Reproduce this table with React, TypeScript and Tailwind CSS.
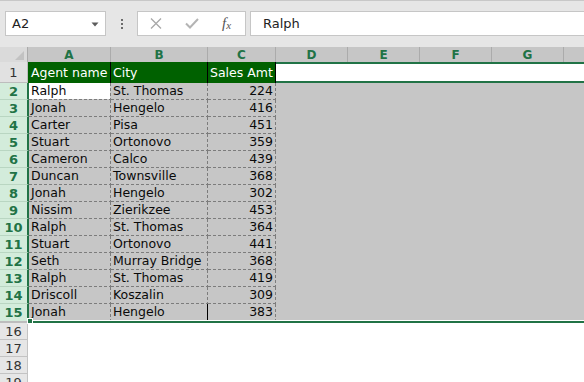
import React from "react";

const rows: [string, string, number][] = [
  ["Ralph", "St. Thomas", 224],
  ["Jonah", "Hengelo", 416],
  ["Carter", "Pisa", 451],
  ["Stuart", "Ortonovo", 359],
  ["Cameron", "Calco", 439],
  ["Duncan", "Townsville", 368],
  ["Jonah", "Hengelo", 302],
  ["Nissim", "Zierikzee", 453],
  ["Ralph", "St. Thomas", 364],
  ["Stuart", "Ortonovo", 441],
  ["Seth", "Murray Bridge", 368],
  ["Ralph", "St. Thomas", 419],
  ["Driscoll", "Koszalin", 309],
  ["Jonah", "Hengelo", 383],
];

const HDASH =
  "bg-[image:repeating-linear-gradient(to_right,#7c7c7c_0px,#7c7c7c_3px,transparent_3px,transparent_5px)]";
const VDASH =
  "bg-[image:repeating-linear-gradient(to_bottom,#7c7c7c_0px,#7c7c7c_3px,transparent_3px,transparent_5px)]";

function DataCell({
  width,
  text,
  alignRight,
  active,
  last,
  solidRight,
}: {
  width: string;
  text: string;
  alignRight?: boolean;
  active?: boolean;
  last?: boolean;
  solidRight?: boolean;
}) {
  return (
    <div className={`${width} h-full flex flex-col shrink-0`}>
      <div className="flex flex-1 min-h-0">
        <div
          className={`flex-1 min-w-0 flex items-center overflow-hidden whitespace-nowrap leading-none pt-[1px] ${
            alignRight ? "justify-end pr-[2px]" : "pl-[2px]"
          } ${active ? "bg-white" : "bg-[#c6c6c6]"} text-[#0a0a0a]`}
        >
          {text}
        </div>
        <div className={`w-px ${solidRight ? "bg-black" : VDASH + " bg-[#c6c6c6]"}`} />
      </div>
      <div className={`h-px ${last ? "bg-white" : HDASH + " bg-[#c6c6c6]"}`} />
    </div>
  );
}

function HeaderCell({ width, label }: { width: string; label: string }) {
  return (
    <div
      className={`${width} shrink-0 h-full border-r border-[#ababab] flex items-center justify-center text-[12px] font-bold text-[#217346] leading-none pt-[1px]`}
    >
      {label}
    </div>
  );
}

export default function App() {
  return (
    <div className="w-[584px] h-[382px] overflow-hidden bg-white font-['DejaVu_Sans',sans-serif] text-[12.5px] relative">
      {/* Toolbar */}
      <div className="h-[47px] bg-[#e6e6e6] border-t border-[#c8c8c8] flex items-start pt-[10px]">
        <div className="ml-[5px] w-[101px] h-[25px] border border-[#c6c6c6] bg-white flex items-center pl-[6px] pr-[6px] text-[#222] text-[13px]">
          <span className="flex-1 leading-none">A2</span>
          <svg width="8" height="5" viewBox="0 0 8 5" className="mt-[1px]">
            <path d="M0.5 0.5 L7.5 0.5 L4 4.5 Z" fill="#5c5c5c" />
          </svg>
        </div>
        <div className="w-[31px] h-[25px] flex flex-col items-center justify-center gap-[2px]">
          <div className="w-[2px] h-[2px] bg-[#6b6b6b]" />
          <div className="w-[2px] h-[2px] bg-[#6b6b6b]" />
          <div className="w-[2px] h-[2px] bg-[#6b6b6b]" />
        </div>
        <div className="w-[109px] h-[25px] border border-[#c6c6c6] bg-white flex items-center">
          <svg width="12" height="11" viewBox="0 0 12 11" className="ml-[12px]">
            <path d="M1 0.5 L11 10.5 M11 0.5 L1 10.5" stroke="#a8a8a8" strokeWidth="1.3" />
          </svg>
          <svg width="14" height="11" viewBox="0 0 14 11" className="ml-[23px]">
            <path d="M1 5.5 L5 9.5 L13 1" stroke="#b4b4b4" strokeWidth="2" fill="none" />
          </svg>
          <div className="ml-[23px] flex font-['Liberation_Serif',serif] italic text-[#555] text-[15px] leading-none">
            <span>f</span>
            <span className="text-[11px] mt-[4px]">x</span>
          </div>
        </div>
        <div className="ml-[4px] flex-1 h-[25px] border border-r-0 border-[#c6c6c6] bg-white flex items-center pl-[12px] text-[#222] text-[13px] leading-none">
          Ralph
        </div>
      </div>

      {/* Column headers */}
      <div className="flex h-[15px] bg-[#c6c6c6]">
        <div className="w-[28px] shrink-0 h-full bg-[#dadada] border-r border-[#ababab] relative">
          <svg width="9" height="9" viewBox="0 0 9 9" className="absolute right-[3px] bottom-[2px]">
            <path d="M9 0 L9 9 L0 9 Z" fill="#c2c2c2" />
          </svg>
        </div>
        <HeaderCell width="w-[83px]" label="A" />
        <HeaderCell width="w-[97px]" label="B" />
        <HeaderCell width="w-[68px]" label="C" />
        <HeaderCell width="w-[72px]" label="D" />
        <HeaderCell width="w-[72px]" label="E" />
        <HeaderCell width="w-[72px]" label="F" />
        <HeaderCell width="w-[72px]" label="G" />
        <div className="flex-1" />
      </div>

      {/* Row 1 */}
      <div className="flex h-[21px]">
        <div className="w-[28px] shrink-0 h-full bg-[#e1e1e1] border-r border-b border-[#bdbdbd] flex items-center justify-center text-[13px] text-[#333] leading-none">
          1
        </div>
        <div className="w-[83px] shrink-0 h-full bg-[#006100] border-r border-black text-white flex items-center pl-[3px] whitespace-nowrap leading-none pt-[1px]">
          Agent name
        </div>
        <div className="w-[97px] shrink-0 h-full bg-[#006100] border-r border-black text-white flex items-center pl-[2px] whitespace-nowrap leading-none pt-[1px]">
          City
        </div>
        <div className="w-[68px] shrink-0 h-full bg-[#006100] border-r border-black text-white flex items-center pl-[2px] whitespace-nowrap leading-none pt-[1px]">
          Sales Amt
        </div>
        <div className="flex-1 h-full bg-white border-y-2 border-[#217346]" />
      </div>

      {/* Data rows */}
      {rows.map((r, i) => {
        const last = i === rows.length - 1;
        return (
          <div key={i} className="flex h-[17px]">
            <div
              className={`w-[29px] shrink-0 h-full bg-[#d3ecdb] border-r-2 border-r-[#217346] flex items-center justify-center text-[13px] font-bold text-[#217346] leading-none ${
                last ? "" : "border-b border-b-[#b9d6c2]"
              }`}
            >
              {i + 2}
            </div>
            <DataCell width="w-[82px]" text={r[0]} active={i === 0} last={last} />
            <DataCell width="w-[97px]" text={r[1]} last={last} solidRight={last} />
            <DataCell width="w-[68px]" text={String(r[2])} alignRight last={last} />
            <div className={`flex-1 h-full bg-[#c6c6c6] ${last ? "border-b border-white" : ""}`} />
          </div>
        );
      })}

      {/* Selection bottom border */}
      <div className="flex h-[2px]">
        <div className="w-[29px] shrink-0 h-full bg-[#bdbdbd] border-r-2 border-[#217346]" />
        <div className="flex-1 h-full bg-[#217346]" />
      </div>

      {/* Empty rows */}
      {[16, 17, 18, 19].map((n) => (
        <div key={n} className="flex h-[17px]">
          <div className="w-[28px] shrink-0 h-full bg-[#e6e6e6] border-r border-b border-[#c3c3c3] flex items-center justify-center text-[13px] text-[#333] leading-none">
            {n}
          </div>
          <div className="flex-1 bg-white" />
        </div>
      ))}

      {/* Fill handle */}
      <div className="absolute left-[27px] top-[318px] w-[6px] h-[6px] bg-[#217346] border border-white" />
    </div>
  );
}
